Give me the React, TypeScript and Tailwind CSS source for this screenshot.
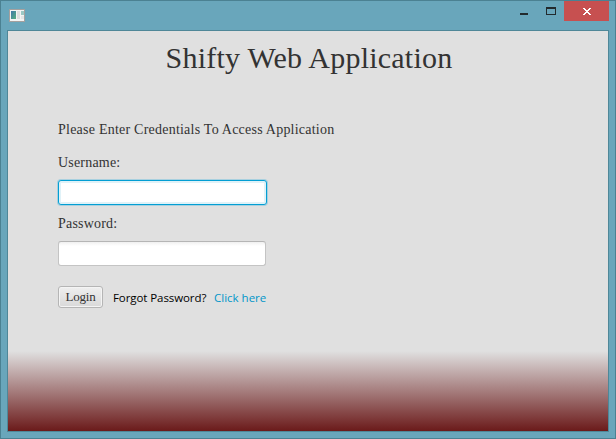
import React from 'react';

function AppIcon() {
  return (
    <svg width="16" height="13" viewBox="0 0 16 13" shapeRendering="crispEdges">
      <defs>
        <linearGradient id="pane" x1="0" y1="0" x2="1" y2="1">
          <stop offset="0" stopColor="#3f78a8" />
          <stop offset="1" stopColor="#58b080" />
        </linearGradient>
      </defs>
      <rect width="16" height="13" fill="#a4a09e" />
      <rect x="1" y="1" width="14" height="11" fill="#f4f4f4" />
      <rect x="2" y="2" width="5" height="8" fill="url(#pane)" />
      <rect x="8" y="2" width="3" height="8" fill="#dedede" />
      <rect x="12" y="2" width="3" height="4" fill="#9cc8c4" />
      <rect x="12" y="7" width="3" height="3" fill="#e6e6e6" />
    </svg>
  );
}

function TitleBar() {
  return (
    <header className="flex h-[29px] shrink-0 items-start justify-between pl-2">
      <div className="pt-2">
        <AppIcon />
      </div>
      <div className="flex pr-[6px]">
        <button aria-label="Minimize" className="flex h-5 w-[27px] items-start pl-[3px] pt-3">
          <span className="h-[2px] w-2 bg-[#222a2d]" />
        </button>
        <button aria-label="Maximize" className="flex h-5 w-5 items-start pt-[6px] pl-[2px]">
          <span className="h-2 w-[10px] border border-t-2 border-[#222a2d]" />
        </button>
        <button aria-label="Close" className="flex h-5 w-[45px] items-start bg-[#c75050] pl-[19px] pt-[7px]">
          <svg width="8" height="7" viewBox="0 0 8 7" fill="#fff" shapeRendering="crispEdges">
            <path d="M0 0h2v1h1v1h2v-1h1v-1h2v1h-1v1h-1v1h-1v1h1v1h1v1h1v1h-2v-1h-1v-1h-2v1h-1v1h-2v-1h1v-1h1v-1h1v-1h-1v-1h-1v-1h-1z" />
          </svg>
        </button>
      </div>
    </header>
  );
}

export default function App() {
  return (
    <div className="flex h-[439px] w-[616px] flex-col overflow-hidden border border-[#4b8192] bg-[#69a6bb] px-[6px] font-['Liberation_Serif',serif] text-[#333]">
      <div className="-mr-[6px] -ml-[6px]">
        <TitleBar />
      </div>
      <main className="flex h-[402px] w-[602px] shrink-0 flex-col border border-[#4f8798] bg-[linear-gradient(to_bottom,#e0e0e0_0%,#e0e0e0_80%,#6b1a1a_100%)]">
        <h1 className="h-[54px] whitespace-nowrap pl-[2px] text-center text-[30px] leading-[54px] tracking-[0.22px]">
          Shifty Web Application
        </h1>
        <form className="flex flex-col pl-[50px]" onSubmit={(e) => e.preventDefault()}>
          <p className="mt-[36px] h-[18px] whitespace-nowrap text-[14px] leading-[18px] tracking-[0.23px]">
            Please Enter Credentials To Access Application
          </p>
          <label htmlFor="user" className="mt-[15px] h-[18px] text-[14px] leading-[18px] tracking-[0.2px]">
            Username:
          </label>
          <input
            id="user"
            className="mt-2 h-[25px] w-[209px] rounded-[3px] border border-[#039ed3] bg-white px-2 shadow-[0_0_0_1px_#7cc3dd90,inset_0_0_0_2px_#e0f2f8] outline-none"
          />
          <label htmlFor="pass" className="mt-[10px] h-[18px] text-[14px] leading-[18px] tracking-[0.2px]">
            Password:
          </label>
          <input
            id="pass"
            type="password"
            className="mt-2 h-[25px] w-[208px] rounded-[3px] border border-[#c4c4c4] border-t-[#b5b5b5] bg-[linear-gradient(to_bottom,#f0f0f0,#fff_4px)] px-2 outline-none"
          />
          <div className="mt-5 flex h-[22px] items-center whitespace-nowrap">
            <button className="h-[22px] w-[45px] rounded-[3px] border border-[#b5b5b5] bg-linear-to-b from-[#efefef] to-[#d9d9d9] text-[13px] leading-5 tracking-[-0.25px] shadow-[inset_0_0_0_1px_#f4f4f4]">
              Login
            </button>
            <span className="ml-[10px] w-[94px] pt-[2px] font-['Open_Sans',sans-serif] text-[11.5px] leading-[22px] tracking-[-0.08px] text-black">
              Forgot Password?
            </span>
            <a className="ml-[7px] pt-[2px] font-['Open_Sans',sans-serif] text-[11.5px] leading-[22px] tracking-[0px] text-[#0096c9]">
              Click here
            </a>
          </div>
        </form>
      </main>
    </div>
  );
}
